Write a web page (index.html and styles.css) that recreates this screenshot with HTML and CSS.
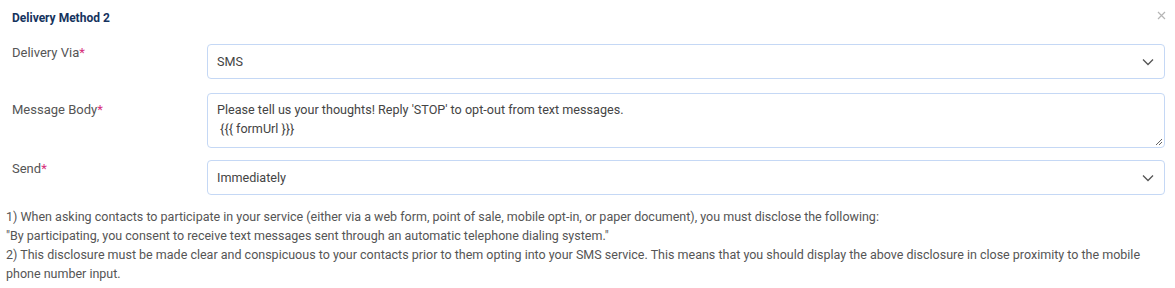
FILE: index.html
```html
<!DOCTYPE html>
<html>
<head>
<meta charset="utf-8">
<link rel="stylesheet" href="styles.css">
</head>
<body>
<div class="panel">
  <div class="header">
    <div class="title">Delivery Method 2</div>
    <div class="close">
      <svg width="9" height="9" viewBox="0 0 9 9"><path d="M1 1L8 8M8 1L1 8" stroke="#b5b5b5" stroke-width="1.2" fill="none"/></svg>
    </div>
  </div>
  <div class="form">
    <div class="row">
      <div class="label">Delivery Via<span class="req">*</span></div>
      <div class="control select">
        <span>SMS</span>
        <svg class="chev" width="12" height="8" viewBox="0 0 12 8"><path d="M1 1.5L6 6.5L11 1.5" stroke="#555" stroke-width="1.3" fill="none"/></svg>
      </div>
    </div>
    <div class="row row-text">
      <div class="label label-text">Message Body<span class="req">*</span></div>
      <div class="control textarea">
        <div>Please tell us your thoughts! Reply 'STOP' to opt-out from text messages.</div>
        <div>&nbsp;{{{ formUrl }}}</div>
        <svg class="grip" width="8" height="8" viewBox="0 0 8 8"><path d="M7 1L1 7M7 4L4 7" stroke="#666" stroke-width="1" fill="none"/></svg>
      </div>
    </div>
    <div class="row">
      <div class="label">Send<span class="req">*</span></div>
      <div class="control select">
        <span>Immediately</span>
        <svg class="chev" width="12" height="8" viewBox="0 0 12 8"><path d="M1 1.5L6 6.5L11 1.5" stroke="#555" stroke-width="1.3" fill="none"/></svg>
      </div>
    </div>
  </div>
  <div class="notes">
    <p class="first">1) When asking contacts to participate in your service (either via a web form, point of sale, mobile opt-in, or paper document), you must disclose the following:</p>
    <p>"By participating, you consent to receive text messages sent through an automatic telephone dialing system."</p>
    <p>2) This disclosure must be made clear and conspicuous to your contacts prior to them opting into your SMS service. This means that you should display the above disclosure in close proximity to the mobile phone number input.</p>
  </div>
</div>
</body>
</html>
```
FILE: styles.css
```css
html, body {
  margin: 0;
  padding: 0;
  background: #fff;
  font-family: Roboto, "Liberation Sans", sans-serif;
}
.panel {
  width: 1175px;
  height: 288px;
  box-sizing: border-box;
}
.header {
  display: flex;
  justify-content: space-between;
  align-items: center;
  height: 34px;
  padding: 0 9px 0 12px;
}
.title {
  font-size: 12px;
  font-weight: 700;
  color: #15335e;
  margin-top: 1px;
}
.close {
  display: flex;
  margin-top: -4px;
}
.form {
  display: flex;
  flex-direction: column;
  gap: 12px;
  padding: 10px 10px 0 12px;
}
.row {
  display: flex;
  align-items: flex-start;
}
.row-text {
  margin-top: 2px;
}
.label {
  width: 195px;
  flex: none;
  font-size: 13px;
  color: #555;
  padding-top: 1px;
}
.label-text {
  padding-top: 9px;
}
.req {
  color: #d62d7a;
}
.control {
  flex: 1;
  border: 1px solid #c5d8f5;
  border-radius: 4px;
  box-sizing: border-box;
  font-size: 12.6px;
  color: #444;
  background: #fff;
}
.select {
  height: 35px;
  display: flex;
  align-items: center;
  justify-content: space-between;
  padding: 0 10px 0 9px;
}
.chev {
  display: block;
}
.textarea {
  height: 55px;
  padding: 6px 9px;
  line-height: 19px;
  position: relative;
}
.grip {
  position: absolute;
  right: 1px;
  bottom: 1px;
}
.notes {
  padding: 12px 10px 0 6px;
  font-size: 12.5px;
  color: #555;
  line-height: 19px;
}
.notes p {
  margin: 0;
}
```
